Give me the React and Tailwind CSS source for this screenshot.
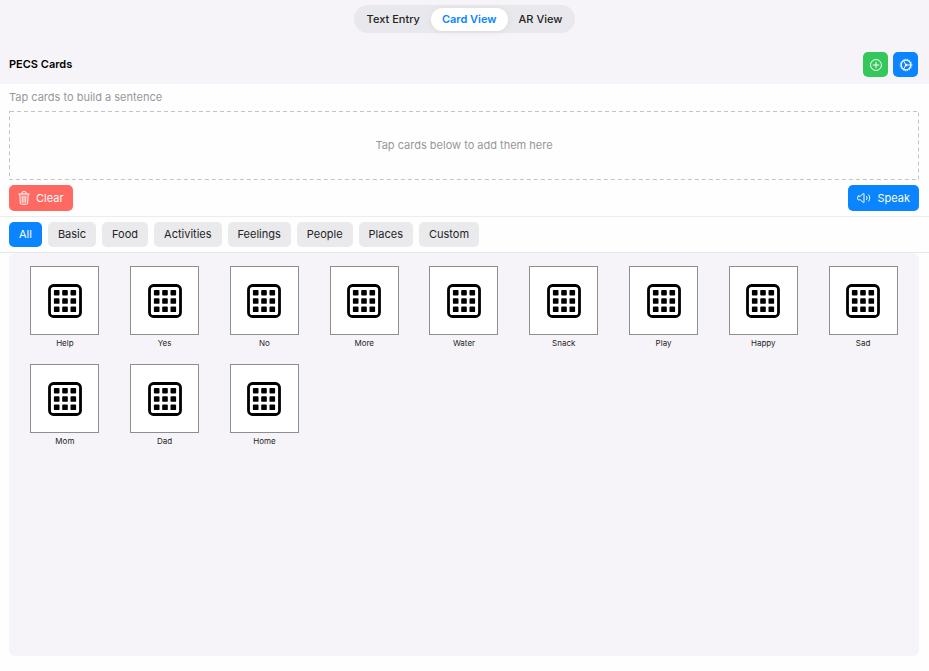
import { useState } from "react";

const views = ["Text Entry", "Card View", "AR View"];

const categories = ["All", "Basic", "Food", "Activities", "Feelings", "People", "Places", "Custom"];

const cards = ["Help", "Yes", "No", "More", "Water", "Snack", "Play", "Happy", "Sad", "Mom", "Dad", "Home"];

function PlusCircleIcon() {
  return (
    <svg viewBox="0 0 14 14" className="size-[14px]" fill="none" stroke="currentColor" strokeWidth="1" strokeLinecap="round" aria-hidden="true">
      <circle cx="7" cy="7" r="5.5" />
      <path d="M7 4.2v5.6M4.2 7h5.6" />
    </svg>
  );
}

function GearIcon() {
  return (
    <svg viewBox="0 0 14 14" className="size-[14px]" fill="none" stroke="currentColor" aria-hidden="true">
      <circle cx="7" cy="7" r="4.8" strokeWidth="1.2" />
      <circle cx="7" cy="7" r="5.8" strokeWidth="1" strokeDasharray="1.2 1.077" />
      <path d="M7 7h4.4M7 7 4.7 3.1M7 7 4.7 10.9" strokeWidth="1" />
      <circle cx="7" cy="7" r="1.2" fill="currentColor" stroke="none" />
    </svg>
  );
}

function TrashIcon() {
  return (
    <svg viewBox="0 0 12 14" className="h-[14px] w-3" fill="none" stroke="currentColor" strokeWidth="1" strokeLinecap="round" strokeLinejoin="round" aria-hidden="true">
      <path d="M0.8 3h10.4M4 2.8V1.5c0-.5.3-.8.8-.8h2.4c.5 0 .8.3.8.8v1.3" />
      <path d="M1.8 3.2l.5 8.8c.1.8.5 1.2 1.2 1.2h5c.7 0 1.1-.4 1.2-1.2l.5-8.8" />
      <path d="M4.1 5l.2 6.3M6 5v6.3M7.9 5l-.2 6.3" />
    </svg>
  );
}

function SpeakerIcon() {
  return (
    <svg viewBox="0 0 14 12" className="h-3 w-[14px]" fill="none" stroke="currentColor" strokeWidth="1" strokeLinecap="round" strokeLinejoin="round" aria-hidden="true">
      <path d="M1.5 4.2h1.8L6.4 1.5c.3-.2.6-.1.6.3v8.4c0 .4-.3.5-.6.3L3.3 7.8H1.5c-.6 0-.9-.3-.9-.9V5.1c0-.6.3-.9.9-.9z" />
      <path d="M9.6 4.4c.7 1 .7 2.2 0 3.2M11.8 3c1.3 1.9 1.3 4.1 0 6" />
    </svg>
  );
}

function GridIcon() {
  const stops = [5.9, 14.2, 22.5];
  return (
    <svg viewBox="0 0 34 34" className="size-[34px]" aria-hidden="true">
      <rect x="1.5" y="1.5" width="31" height="31" rx="4" fill="none" stroke="#000" strokeWidth="2.8" />
      {stops.map((y) =>
        stops.map((x) => <rect key={`${x}-${y}`} x={x} y={y} width="5.6" height="5.6" rx="0.9" fill="#000" />)
      )}
    </svg>
  );
}

function DashedOutline() {
  return (
    <svg className="absolute inset-0 size-full" fill="none" stroke="#c4c4c6" strokeWidth="2" strokeDasharray="4 3" aria-hidden="true">
      <rect width="100%" height="100%" rx="1" />
    </svg>
  );
}

export default function App() {
  const [view, setView] = useState("Card View");
  const [category, setCategory] = useState("All");

  return (
    <main className="flex min-h-screen flex-col bg-[#fefefe] font-['Inter',sans-serif] text-[11px] leading-[15px] text-[#242426]">
      <header className="bg-[#f6f4f8] pt-[5px] pb-[7px]">
        <nav className="mx-auto flex h-7 w-fit items-center rounded-full bg-[#e9e8ec] px-[2px]">
          {views.map((name) => (
            <button
              key={name}
              type="button"
              onClick={() => setView(name)}
              className={
                name === view
                  ? "h-[23px] rounded-full bg-white px-[11px] font-semibold text-[#0a84ff] shadow-[0_1px_8px_rgba(0,0,0,0.06)]"
                  : "h-[23px] rounded-full px-[11px] font-medium"
              }
            >
              {name}
            </button>
          ))}
        </nav>
        <div className="mt-[19px] flex items-center justify-between pr-[11px] pl-[9px]">
          <h1 className="font-semibold text-black">PECS Cards</h1>
          <div className="flex gap-[5px]">
            <button type="button" aria-label="Add card" className="flex size-[25px] items-center justify-center rounded-[5px] bg-[#34c759] text-white">
              <PlusCircleIcon />
            </button>
            <button type="button" aria-label="Settings" className="flex size-[25px] items-center justify-center rounded-[5px] bg-[#0a84ff] text-white">
              <GearIcon />
            </button>
          </div>
        </div>
      </header>

      <section className="border-b border-[#ececee] pt-[6px] pr-[10px] pb-[5px] pl-[9px]">
        <p className="text-[#97979c]">Tap cards to build a sentence</p>
        <div className="relative mt-[6px] flex h-[69px] items-center justify-center">
          <DashedOutline />
          <p className="text-[#97979c]">Tap cards below to add them here</p>
        </div>
        <div className="mt-[5px] flex justify-between">
          <button type="button" className="flex h-[26px] items-center gap-[6px] rounded-[5px] bg-[#ff6961] px-[9px] text-white">
            <TrashIcon />
            Clear
          </button>
          <button type="button" className="flex h-[26px] items-center gap-[6px] rounded-[5px] bg-[#0a84ff] px-[9px] text-white">
            <SpeakerIcon />
            Speak
          </button>
        </div>
      </section>

      <div className="flex flex-wrap gap-[6px] border-b border-[#e6e6e8] px-[9px] py-[5px]">
        {categories.map((name) => (
          <button
            key={name}
            type="button"
            onClick={() => setCategory(name)}
            className={
              name === category
                ? "h-[25px] rounded-[5px] bg-[#0a84ff] px-[10px] text-white"
                : "h-[25px] rounded-[5px] bg-[#eae9ec] px-[10px]"
            }
          >
            {name}
          </button>
        ))}
      </div>

      <section className="mr-[10px] mb-[15px] ml-[9px] flex-1 rounded-[6px] bg-[#f6f4f8] px-[6px] pt-[13px]">
        <div className="grid grid-cols-[repeat(auto-fill,minmax(92px,1fr))] gap-y-[15px]">
          {cards.map((name) => (
            <button key={name} type="button" className="flex flex-col items-center gap-[3px]">
              <span className="flex size-[69px] items-center justify-center border border-[#8e8e90] bg-white">
                <GridIcon />
              </span>
              <span className="text-[8px] leading-[11px]">{name}</span>
            </button>
          ))}
        </div>
      </section>
    </main>
  );
}
